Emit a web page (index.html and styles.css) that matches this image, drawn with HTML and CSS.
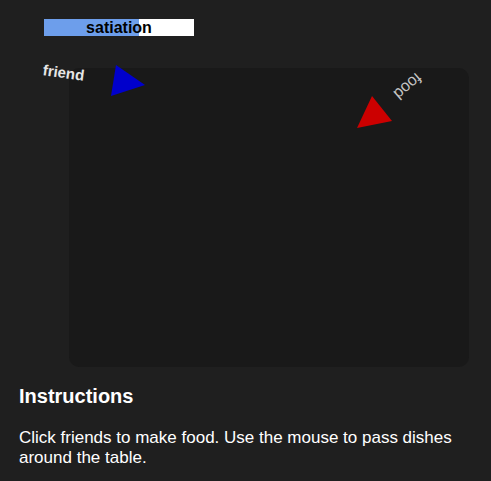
FILE: index.html
```html
<!DOCTYPE html>
<html>
<head>
<meta charset="utf-8">
<link rel="stylesheet" href="styles.css">
</head>
<body>
<div class="stage">
  <div class="table"></div>
  <div class="bar"><div class="bar-fill" style="width:95px"></div><span class="bar-label">satiation</span></div>
  <span class="label friend">friend</span>
  <svg class="tri" width="491" height="370" viewBox="0 0 491 370">
    <polygon points="116,65 145,85 111,96" fill="#0000cc"/>
    <polygon points="372,96 392,121 357,128" fill="#cc0000"/>
  </svg>
  <span class="label food">food</span>
</div>
<section class="instructions">
  <h2>Instructions</h2>
  <p>Click friends to make food. Use the mouse to pass dishes around the table.</p>
</section>
</body>
</html>
```
FILE: styles.css
```css
html, body {
  margin: 0;
  background: #1f1f1f;
  font-family: "Liberation Sans", Arial, sans-serif;
  color: #fff;
}
.stage {
  position: relative;
  width: 491px;
  height: 370px;
}
.table {
  position: absolute;
  left: 69px;
  top: 68px;
  width: 400px;
  height: 299px;
  background: #191919;
  border-radius: 10px;
}
.bar {
  position: absolute;
  left: 44px;
  top: 19px;
  width: 150px;
  height: 17px;
  background: #fff;
  display: flex;
  align-items: center;
  justify-content: center;
}
.bar-fill {
  position: absolute;
  left: 0;
  top: 0;
  bottom: 0;
  background: #6d9eeb;
}
.bar-label {
  position: relative;
  color: #000;
  font-weight: bold;
  font-size: 16px;
}
.tri {
  position: absolute;
  left: 0;
  top: 0;
}
.label {
  position: absolute;
  white-space: nowrap;
}
.friend {
  left: 43px;
  top: 61px;
  font-size: 15px;
  font-weight: bold;
  color: #e6e6e6;
  transform: rotate(8deg);
  transform-origin: 0 50%;
}
.food {
  left: 392px;
  top: 77px;
  font-size: 16px;
  color: #c4c4c4;
  transform: rotate(139deg);
  transform-origin: 50% 50%;
}
.instructions {
  padding: 0 19px;
}
.instructions h2 {
  margin: 15px 0 0;
  font-size: 20px;
  line-height: 23px;
  font-weight: bold;
}
.instructions p {
  margin: 20px 0 0;
  font-size: 17px;
  line-height: 20px;
}
```
